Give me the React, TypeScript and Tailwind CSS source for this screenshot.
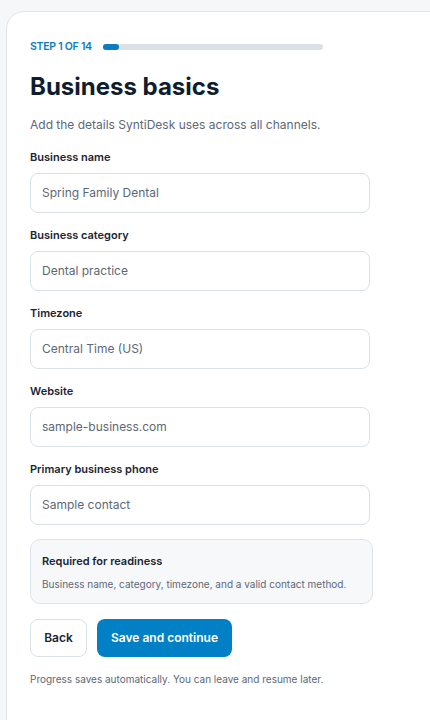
import React from 'react';

const fields = [
  { label: 'Business name', value: 'Spring Family Dental' },
  { label: 'Business category', value: 'Dental practice' },
  { label: 'Timezone', value: 'Central Time (US)' },
  { label: 'Website', value: 'sample-business.com' },
  { label: 'Primary business phone', value: 'Sample contact' },
];

export default function App() {
  return (
    <div className="w-[430px] h-[720px] overflow-hidden bg-[#f6f7f9] pt-[11px] pl-[6px] font-['Inter',sans-serif]">
      <div className="w-[480px] min-h-[760px] bg-white border border-[#dfe4ea] rounded-tl-[18px] pl-[23px] pt-[27px]">
        {/* Step progress */}
        <div className="flex items-center gap-[11px]">
          <span className="text-[10.5px] font-semibold text-[#0a7cc1] tracking-tight">STEP 1 OF 14</span>
          <div className="w-[220px] h-[6px] rounded-full bg-[#dbe1e8]">
            <div className="w-[16px] h-[6px] rounded-full bg-[#0a7cc1]" />
          </div>
        </div>

        <h1 className="mt-[17px] text-[24px] leading-[30px] font-bold text-[#0f1d2e]">Business basics</h1>
        <p className="mt-[14px] text-[12px] leading-[18px] text-[#5d6877]">Add the details SyntiDesk uses across all channels.</p>

        <div className="w-[340px] mt-[15px]">
          {fields.map((f) => (
            <div key={f.label} className="pb-[14px]">
              <label className="block text-[11px] leading-[16px] font-semibold text-[#1a2533]">{f.label}</label>
              <div className="mt-[8px] h-[40px] rounded-[8px] border border-[#dbe1e8] flex items-center px-[11px] text-[12px] text-[#5d6877]">
                {f.value}
              </div>
            </div>
          ))}

          <div className="w-[343px] rounded-[10px] border border-[#dfe4ea] bg-[#f7f8fa] px-[11px] pt-[13px] pb-[12px]">
            <div className="text-[11px] leading-[16px] font-semibold text-[#1a2533]">Required for readiness</div>
            <div className="mt-[8px] text-[10px] leading-[14px] text-[#5d6877]">
              Business name, category, timezone, and a valid contact method.
            </div>
          </div>

          <div className="mt-[15px] flex items-center gap-[10px]">
            <button className="h-[38px] w-[57px] rounded-[8px] border border-[#dbe1e8] bg-white text-[12px] font-semibold text-[#1a2533]">
              Back
            </button>
            <button className="h-[38px] w-[135px] rounded-[8px] bg-[#0280c6] text-[12px] font-semibold text-white">
              Save and continue
            </button>
          </div>

          <p className="mt-[15px] text-[10px] leading-[14px] text-[#5d6877]">
            Progress saves automatically. You can leave and resume later.
          </p>
        </div>
      </div>
    </div>
  );
}
